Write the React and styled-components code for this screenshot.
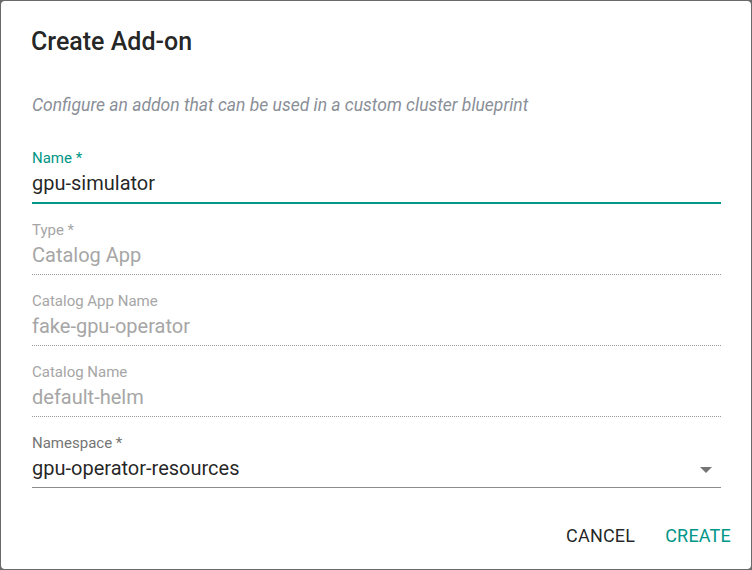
import React from "react";
import styled, { createGlobalStyle } from "styled-components";

const Global = createGlobalStyle`
  html, body { margin: 0; padding: 0; }
  body {
    background: #6a6a6a;
    font-family: Roboto, "Liberation Sans", sans-serif;
    width: 752px;
    height: 570px;
    overflow: hidden;
  }
`;

const Backdrop = styled.div`
  width: 752px;
  height: 570px;
  padding: 1px 1px 0 1px;
  box-sizing: border-box;
`;

const Dialog = styled.div`
  width: 750px;
  height: 568px;
  background: #fff;
  border-radius: 4px;
  box-sizing: border-box;
  padding: 0 30px 0 31px;
  display: flex;
  flex-direction: column;
`;

const Title = styled.h2`
  margin: 0 0 0 -1px;
  padding-top: 27px;
  font-size: 25px;
  line-height: 28px;
  font-weight: 500;
  color: rgba(0, 0, 0, 0.87);
`;

const Description = styled.p`
  margin: 39px 0 0 0;
  font-size: 17.5px;
  line-height: 20px;
  font-style: italic;
  color: #8a8f98;
`;

const Fields = styled.div`
  margin-top: 35px;
  display: flex;
  flex-direction: column;
  width: 689px;
`;

const Field = styled.div`
  display: flex;
  flex-direction: column;
  padding-top: ${(p) => (p.$first ? 0 : 18)}px;
`;

const Label = styled.label`
  font-size: 15px;
  line-height: 16px;
  color: ${(p) => (p.$focused ? "#009688" : p.$disabled ? "#a6a6a6" : "#757575")};
`;

const ValueRow = styled.div`
  display: flex;
  align-items: center;
  justify-content: space-between;
  margin-top: 5px;
  padding-bottom: 7px;
  border-bottom: ${(p) =>
    p.$focused
      ? "2px solid #009688"
      : p.$disabled
      ? "1px dotted #9a9a9a"
      : "1px solid #8c8c8c"};
`;

const Value = styled.span`
  font-size: 20px;
  line-height: 24px;
  color: ${(p) => (p.$disabled ? "#a6a6a6" : "rgba(0,0,0,0.87)")};
`;

const Arrow = styled.svg`
  width: 12px;
  height: 6px;
  margin-right: 9px;
  margin-top: 4px;
  fill: #757575;
`;

const Actions = styled.div`
  margin-top: auto;
  margin-bottom: 22px;
  display: flex;
  justify-content: flex-end;
  gap: 30px;
  margin-right: -10px;
`;

const Button = styled.button`
  background: none;
  border: none;
  padding: 0;
  font-family: Roboto, "Liberation Sans", sans-serif;
  font-size: 18px;
  line-height: 22px;
  letter-spacing: 0.2px;
  text-transform: uppercase;
  color: ${(p) => (p.$primary ? "#009688" : "rgba(0,0,0,0.87)")};
  cursor: pointer;
`;

const fields = [
  { label: "Name *", value: "gpu-simulator", focused: true },
  { label: "Type *", value: "Catalog App", disabled: true },
  { label: "Catalog App Name", value: "fake-gpu-operator", disabled: true },
  { label: "Catalog Name", value: "default-helm", disabled: true },
  { label: "Namespace *", value: "gpu-operator-resources", select: true },
];

export default function App() {
  return (
    <>
      <Global />
      <Backdrop>
        <Dialog>
          <Title>Create Add-on</Title>
          <Description>
            Configure an addon that can be used in a custom cluster blueprint
          </Description>
          <Fields>
            {fields.map((f, i) => (
              <Field key={f.label} $first={i === 0}>
                <Label $focused={f.focused} $disabled={f.disabled}>
                  {f.label}
                </Label>
                <ValueRow $focused={f.focused} $disabled={f.disabled}>
                  <Value $disabled={f.disabled}>{f.value}</Value>
                  {f.select && (
                    <Arrow viewBox="0 0 12 6">
                      <polygon points="0,0 12,0 6,6" />
                    </Arrow>
                  )}
                </ValueRow>
              </Field>
            ))}
          </Fields>
          <Actions>
            <Button>Cancel</Button>
            <Button $primary>Create</Button>
          </Actions>
        </Dialog>
      </Backdrop>
    </>
  );
}
